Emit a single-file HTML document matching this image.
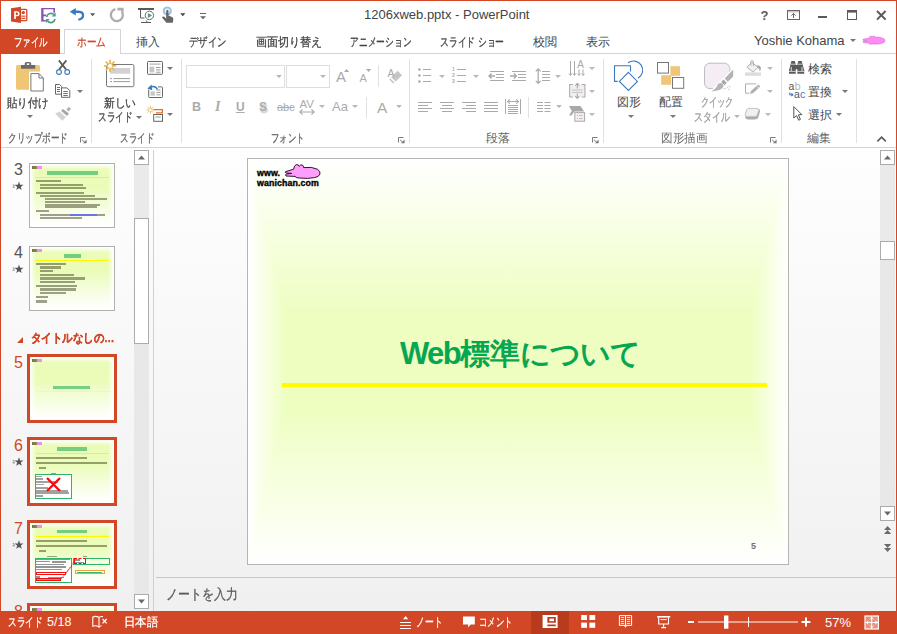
<!DOCTYPE html>
<html lang="ja">
<head>
<meta charset="utf-8">
<title>1206xweb.pptx - PowerPoint</title>
<style>
*{box-sizing:border-box;margin:0;padding:0}
html,body{width:897px;height:634px;overflow:hidden;background:#fff}
body{position:relative;font-family:"Liberation Sans",sans-serif;font-size:12px;color:#444;line-height:1}
.a{position:absolute}
.t{position:absolute;white-space:nowrap;line-height:1;font-size:12px;color:#444}
.t span.s{display:inline-block;transform-origin:0 50%;-webkit-text-stroke:.3px}
.g{color:#ababab}
.lbl{color:#666}
svg{position:absolute;left:0;top:0;overflow:visible}
.vsep{position:absolute;width:1px;background:#e1e1e1}
.dd{position:absolute;width:0;height:0;border-left:3px solid transparent;border-right:3px solid transparent;border-top:3px solid #777}
.dd.g{border-top-color:#b8b8b8}

.sb{background:#fff;border:1px solid #ababab}
.num{font-size:16px;color:#555}
.num.o{color:#d24726}
.star{font-size:12px;color:#555}
.th{width:86px;height:65px;border:1px solid #b0b0b0;overflow:hidden;background:
 linear-gradient(to right,#fff 0,rgba(255,255,255,0) 9%,rgba(255,255,255,0) 91%,#fff 100%),
 linear-gradient(to bottom,#fff 0,rgba(255,255,255,.55) 14%,rgba(255,255,255,0) 38%,rgba(255,255,255,0) 58%,rgba(255,255,255,.6) 84%,#fff 100%),
 #ecfdbc}
.th.c{background:
 linear-gradient(to right,#fff 0,rgba(255,255,255,0) 7%,rgba(255,255,255,0) 93%,#fff 100%),
 linear-gradient(to bottom,#fff 0,rgba(255,255,255,0) 9%,rgba(255,255,255,0) 38%,rgba(255,255,255,.5) 66%,rgba(255,255,255,.95) 94%,#fff 100%),
 #eafcb8}
.th.sel{width:90px;height:69px;border:3px solid #d24726}
.th i,.th u,.th b,.th svg{position:absolute;display:block;text-decoration:none}
.th i{filter:blur(.35px)}
.th b.lg{width:10px;height:3px;background:linear-gradient(to right,rgba(60,60,0,.7) 0,rgba(60,60,0,.6) 45%,#f58cf0 50%,#f58cf0 100%);filter:blur(.4px)}
.k{display:inline-block;width:1em;text-align:center}
</style>
</head>
<body>
<!-- window frame -->
<div class="a" style="left:0;top:0;width:897px;height:634px;border:1px solid #d24726;border-bottom:none"></div>

<!-- ===== title bar ===== -->
<div class="t" id="title" style="left:364px;top:8px;font-size:13px;color:#444">1206xweb.pptx - PowerPoint</div>

<svg id="svg-title" width="897" height="56" viewBox="0 0 897 56">
 <!-- PowerPoint logo -->
 <rect x="20.5" y="9.3" width="6.3" height="11.4" rx="1" fill="#fff" stroke="#d24726" stroke-width="1.3"/>
 <circle cx="23.3" cy="12.6" r="1.7" fill="#d24726"/>
 <rect x="21.5" y="15.6" width="4" height="1.1" fill="#d24726"/>
 <rect x="21.5" y="17.8" width="4" height="1.1" fill="#d24726"/>
 <path d="M11 8.3 L21 6.8 V23 L11 21.4 Z" fill="#d24726"/>
 <path d="M14.2 11.3 H17 Q19.6 11.3 19.6 13.8 Q19.6 16.3 17 16.3 H15.8 V18.9 H14.2 Z M15.8 12.6 V15 H16.8 Q18 15 18 13.8 Q18 12.6 16.8 12.6 Z" fill="#fff" fill-rule="evenodd"/>
 <!-- save / sync -->
 <path d="M41.2 8.1 H55 V12.8 H53.4 V9.3 H43.5 V14.4 H46 V16.2 H43.5 V20 H45.8 V21.6 H41.2 Z" fill="#8a51b5"/>
 <g fill="none" stroke="#4f9c85" stroke-width="1.7">
  <path d="M46.7 17 A4.3 4.3 0 0 1 54 14.6"/>
  <path d="M55 19 A4.3 4.3 0 0 1 47.6 21.2"/>
 </g>
 <path d="M55.7 12.6 V16.6 H51.7 Z" fill="#4f9c85"/>
 <path d="M45.9 23 V19 H49.9 Z" fill="#4f9c85"/>
 <!-- undo -->
 <path d="M69.8 11.7 L75.8 7.9 V10.4 H78.5 Q84.3 10.6 84.2 15.4 Q84 19.6 78.6 20.7 L78 18.8 Q81.9 17.9 81.9 15.3 Q81.9 12.9 78.5 12.9 H75.8 V15.6 Z" fill="#3b79bd"/>
 <path d="M90 13.3 H95.2 L92.6 16.2 Z" fill="#5a5a5a"/>
 <!-- redo (disabled) -->
 <path d="M115.4 9.2 A6 6 0 1 0 122.7 13.6" fill="none" stroke="#adadad" stroke-width="2.3"/>
 <path d="M117.4 7.8 H123.6 V13.8 H121.2 L121.2 10.4 L117.4 10.4 Z" fill="#adadad"/>
 <!-- start slideshow -->
 <rect x="138" y="8" width="16" height="2" fill="#5a5a5a"/>
 <path d="M140.5 10 V18 H144.5" fill="none" stroke="#5a5a5a" stroke-width="1"/>
 <path d="M141 22.5 H151 M146.3 20.5 L147.5 22.5" fill="none" stroke="#5a5a5a" stroke-width="1"/>
 <circle cx="149.4" cy="15.4" r="4.2" fill="#fff" stroke="#6a6a6a" stroke-width="1"/>
 <path d="M147.9 12.9 L152.2 15.4 L147.9 17.9 Z" fill="#4f9c85"/>
 <!-- touch mode -->
 <circle cx="167.3" cy="11" r="3.5" fill="none" stroke="#9cc2e4" stroke-width="2.2"/>
 <path d="M166.2 10.4 Q167.3 9.3 168.5 10.4 V15.6 L172.4 17.2 Q173.6 18 173.3 19.6 L172.8 22.8 H166.4 L162 17.6 Q162.6 16.2 164.2 16.8 L166.2 18.4 Z" fill="#666"/>
 <path d="M180.2 13.3 H185.4 L182.8 16.2 Z" fill="#444"/>
 <!-- customize QAT -->
 <rect x="200" y="13" width="6" height="1" fill="#666"/>
 <path d="M200 16.3 H206 L203 19.2 Z" fill="#666"/>
 <!-- window controls -->
 <text x="760.5" y="20" font-family="Liberation Sans, sans-serif" font-size="13" font-weight="bold" fill="#5a5a5a">?</text>
 <rect x="787.5" y="10.5" width="12" height="9" fill="none" stroke="#666" stroke-width="1"/>
 <rect x="787.5" y="10.5" width="12" height="2" fill="#666" opacity=".35"/>
 <path d="M793.5 18 V13.6 M791.3 15.6 L793.5 13.4 L795.7 15.6" fill="none" stroke="#666" stroke-width="1"/>
 <rect x="818" y="16" width="9" height="2" fill="#5a5a5a"/>
 <rect x="847.5" y="11.5" width="9" height="8" fill="none" stroke="#5a5a5a" stroke-width="1"/>
 <rect x="847" y="10" width="10" height="2.6" fill="#5a5a5a"/>
 <path d="M877 11 L885.6 19.6 M885.6 11 L877 19.6" stroke="#5a5a5a" stroke-width="2" fill="none"/>
 <!-- avatar (pink alligator) -->
 <path d="M863.2 39.2 L869 38 L870.5 36 L872.5 36.8 L873.5 35.8 L875.2 37 Q881 36.6 884.6 39.2 Q885.6 41 884 42.6 Q880 44.6 872.6 44 Q869 44.6 868 43 L863.4 42.6 L863 41.4 L866.6 40.8 L863 40.2 Z" fill="#ff8cf4" stroke="#c060c0" stroke-width=".5"/>
</svg>

<!-- ===== tab row ===== -->
<div class="a" style="left:1px;top:29px;width:59px;height:25px;background:#d24726"></div>
<div class="a" style="left:1px;top:53px;width:895px;height:1px;background:#d4d4d4"></div>
<div class="a" style="left:1px;top:29px;width:59px;height:25px;background:#d24726"></div>
<div class="a" style="left:64px;top:29px;width:57px;height:25px;background:#fff;border:1px solid #d4d4d4;border-bottom:none"></div>
<div class="t" style="left:14px;top:36px;color:#fff"><span class="s" style="transform:scaleX(.70)"><span class="k">フ</span><span class="k">ァ</span><span class="k">イ</span><span class="k">ル</span></span></div>
<div class="t" style="left:77px;top:36px;color:#d24726"><span class="s" style="transform:scaleX(.80)"><span class="k">ホ</span><span class="k">ー</span><span class="k">ム</span></span></div>
<div class="t" style="left:136px;top:36px"><span class="k">挿</span><span class="k">入</span></div>
<div class="t" style="left:189px;top:36px"><span class="s" style="transform:scaleX(.78)"><span class="k">デ</span><span class="k">ザ</span><span class="k">イ</span><span class="k">ン</span></span></div>
<div class="t" style="left:256px;top:36px"><span class="s" style="transform:scaleX(.92)"><span class="k">画</span><span class="k">面</span><span class="k">切</span><span class="k">り</span><span class="k">替</span><span class="k">え</span></span></div>
<div class="t" style="left:350px;top:36px"><span class="s" style="transform:scaleX(.73)"><span class="k">ア</span><span class="k">ニ</span><span class="k">メ</span><span class="k">ー</span><span class="k">シ</span><span class="k">ョ</span><span class="k">ン</span></span></div>
<div class="t" style="left:440px;top:36px"><span class="s" style="transform:scaleX(.735)"><span class="k">ス</span><span class="k">ラ</span><span class="k">イ</span><span class="k">ド</span> <span class="k">シ</span><span class="k">ョ</span><span class="k">ー</span></span></div>
<div class="t" style="left:533px;top:36px"><span class="k">校</span><span class="k">閲</span></div>
<div class="t" style="left:586px;top:36px"><span class="k">表</span><span class="k">示</span></div>
<div class="t" id="user" style="left:754px;top:34px;font-size:13px">Yoshie Kohama</div>
<div class="dd" style="left:850px;top:39px"></div>

<!-- ===== ribbon ===== -->
<div class="a" style="left:1px;top:147px;width:895px;height:1px;background:#d4d4d4"></div>
<div class="vsep" style="left:91px;top:59px;height:84px"></div>
<div class="vsep" style="left:181px;top:59px;height:84px"></div>
<div class="vsep" style="left:409px;top:59px;height:84px"></div>
<div class="vsep" style="left:603px;top:59px;height:84px"></div>
<div class="vsep" style="left:781px;top:59px;height:84px"></div>
<div class="vsep" style="left:856px;top:59px;height:84px"></div>

<svg id="svg-rib1" width="897" height="150" viewBox="0 0 897 150">
 <!-- paste -->
 <rect x="16" y="65" width="24" height="24.7" rx="1.6" fill="#efc676"/>
 <path d="M21 65 H24.7 V63.6 Q24.7 62 26.3 62 H29.6 Q31.2 62 31.2 63.6 V65 H35.2 V68.7 H21 Z" fill="#6a6a6a"/>
 <rect x="26.7" y="63.4" width="2.6" height="1.6" fill="#fff"/>
 <rect x="29" y="71.6" width="16" height="21.4" fill="#fff"/>
 <path d="M30.9 73.6 H39 L43.3 78 V91 H30.9 Z" fill="#fff" stroke="#777" stroke-width="1"/>
 <path d="M39 73.6 V78 H43.3" fill="none" stroke="#777" stroke-width="1"/>
 <!-- cut -->
 <path d="M58.8 60.4 L66 69.4 M66.4 60.4 L59.2 69.4" stroke="#5a5a5a" stroke-width="1.7" fill="none"/>
 <circle cx="59" cy="72" r="2.4" fill="#fff" stroke="#3b79bd" stroke-width="1.1"/>
 <circle cx="67.2" cy="72" r="2.4" fill="#fff" stroke="#3b79bd" stroke-width="1.1"/>
 <!-- copy -->
 <path d="M55.5 84.5 H59.6 L61.8 86.7 V94.2 H55.5 Z" fill="#fff" stroke="#666" stroke-width="1"/>
 <path d="M57 87.5 H60 M57 89.5 H60 M57 91.5 H60" stroke="#3b79bd" stroke-width="1"/>
 <path d="M61.5 87.9 H67 L69.8 90.7 V97.3 H61.5 Z" fill="#fff" stroke="#666" stroke-width="1"/>
 <path d="M63.3 91.5 H67.8 M63.3 93.5 H67.8 M63.3 95.5 H67.8" stroke="#3b79bd" stroke-width="1"/>
 <!-- format painter (disabled) -->
 <path d="M68.5 106.9 L71.1 108.6 L68.9 111.6 L66.3 109.7 Z" fill="#b2b2b2"/>
 <path d="M63 108.9 L68.9 113.6 L67.1 115.9 L61 110.7 Z" fill="#a6a6a6"/>
 <path d="M59.8 111.6 L65.9 117.3 L62.2 120.7 L55.1 113.4 Z" fill="#d4d4d4"/>
 <!-- new slide -->
 <rect x="106.5" y="64.5" width="27.4" height="22.2" rx="1.6" fill="#fff" stroke="#777" stroke-width="1"/>
 <rect x="110" y="68" width="20.2" height="5.7" fill="#d2d2d2"/>
 <path d="M110 78.6 H112 M113.4 78.6 H130 M110 81.6 H112 M113.4 81.6 H130" stroke="#9a9a9a" stroke-width="1"/>
 <g stroke="#e9b955" stroke-width="1.8" fill="none">
  <path d="M110.1 59.8 V72 M104 65.9 H116.2 M105.8 61.6 L114.4 70.2 M114.4 61.6 L105.8 70.2"/>
 </g>
 <circle cx="110.1" cy="65.9" r="2" fill="#fff"/>
 <!-- layout -->
 <rect x="147.5" y="61.5" width="15" height="12.8" rx=".8" fill="#fff" stroke="#666" stroke-width="1"/>
 <rect x="149.5" y="63.3" width="11" height="1.7" fill="#c8c8c8"/>
 <rect x="149.5" y="66.6" width="4.8" height="5.8" fill="#c8c8c8"/>
 <path d="M156 67.5 H160.6 M156 69.9 H160.6 M156 72.2 H160.6" stroke="#9a9a9a" stroke-width="1"/>
 <!-- reset -->
 <rect x="148.7" y="86.9" width="13.8" height="10.6" rx=".8" fill="#fff" stroke="#666" stroke-width="1"/>
 <rect x="150.5" y="91.4" width="4.4" height="4.3" fill="#c8c8c8"/>
 <path d="M156.4 90 H160.6 M156.4 92.4 H160.6 M156.4 94.8 H160.6" stroke="#9a9a9a" stroke-width="1"/>
 <path d="M146 84 H158 V89.6 H146 Z" fill="#fff"/>
 <path d="M157.4 89.6 Q156 85.6 151.2 86.8" fill="none" stroke="#3b79bd" stroke-width="1.4"/>
 <path d="M147.4 88.6 L151.6 84.6 L152.2 90.2 Z" fill="#3b79bd"/>
 <!-- section -->
 <g stroke="#e9b955" stroke-width="1" fill="none">
  <path d="M150.4 106.2 V113.6 M146.7 109.9 H154.1 M147.8 107.3 L153 112.5 M153 107.3 L147.8 112.5"/>
 </g>
 <circle cx="150.4" cy="109.9" r="1.2" fill="#fff"/>
 <path d="M153.6 109.6 H162.4 V112.8 H156" fill="none" stroke="#e3701e" stroke-width="1.2"/>
 <rect x="153.7" y="114.5" width="8.8" height="6.8" fill="#fff" stroke="#666" stroke-width="1"/>
 <rect x="155.5" y="116.2" width="5.2" height="1.8" fill="#c8c8c8"/>
</svg>
<svg id="svg-rib2" width="897" height="150" viewBox="0 0 897 150">
 <g fill="#a9a9a9">
  <!-- grow/shrink triangles -->
  <path d="M344 72 L346.6 69 L349.2 72 Z"/>
  <path d="M366 69 H371.2 L368.6 72 Z"/>
  <!-- clear formatting eraser -->
  <path d="M397.6 70.8 L402 75.2 L395.6 81.6 L391.2 77.2 Z" fill="#c6c6c6"/>
  <path d="M390.4 78.4 L394.4 82.4 L393.2 83.6 L389.2 79.6 Z" fill="#c6c6c6"/>
 </g>
 <!-- AV arrows -->
 <path d="M299.6 112 H314.4 M302.6 109.4 L299.8 112 L302.6 114.6 M311.4 109.4 L314.2 112 L311.4 114.6" fill="none" stroke="#a9a9a9" stroke-width="1.1"/>
 <g stroke="#a9a9a9" stroke-width="1" fill="none">
  <!-- bullets -->
  <path d="M423 69.5 H431 M423 75.5 H431 M423 81.5 H431"/>
  <!-- numbering -->
  <path d="M457 69.5 H466 M457 75.5 H466 M457 81.5 H466"/>
  <!-- decrease indent -->
  <path d="M490 71.5 H504 M496 74.5 H504 M496 77.5 H504 M490 80.5 H504" />
  <path d="M489 76 H495 M491.6 73.4 L489 76 L491.6 78.6" stroke-width="1.4"/>
  <!-- increase indent -->
  <path d="M512 71.5 H526 M518 74.5 H526 M518 77.5 H526 M512 80.5 H526" />
  <path d="M510 76 H516.4 M513.8 73.4 L516.4 76 L513.8 78.6" stroke-width="1.4"/>
  <!-- line spacing -->
  <path d="M542 71.5 H550 M542 74.5 H550 M542 77.5 H550 M542 80.5 H550"/>
  <path d="M538.2 69 V83 M535.8 71.4 L538.2 68.8 L540.6 71.4 M535.8 80.8 L538.2 83.4 L540.6 80.8" stroke-width="1.2"/>
  <!-- align left/center/right/justify -->
  <path d="M418 102.5 H432 M418 105.5 H428 M418 108.5 H432 M418 111.5 H428"/>
  <path d="M440 102.5 H454 M442 105.5 H452 M440 108.5 H454 M442 111.5 H452"/>
  <path d="M462 102.5 H476 M466 105.5 H476 M462 108.5 H476 M466 111.5 H476"/>
  <path d="M484 102.5 H498 M484 105.5 H498 M484 108.5 H498 M484 111.5 H498"/>
  <!-- distributed -->
  <path d="M505.5 99 V114 M520.5 99 V114"/>
  <path d="M508 105.5 H518 M508 107.5 H518 M508 109.5 H518 M508 111.5 H518 M508 113.5 H518"/>
  <path d="M507.6 101.5 H518.4 M509.8 99.4 L507.6 101.5 L509.8 103.6 M516.2 99.4 L518.4 101.5 L516.2 103.6" stroke-width="1.1"/>
  <!-- columns -->
  <path d="M537 102.5 H543 M537 105.5 H543 M537 108.5 H543 M537 111.5 H543 M544.5 102.5 H550.5 M544.5 105.5 H550.5 M544.5 108.5 H550.5 M544.5 111.5 H550.5"/>
  <!-- text direction -->
  <path d="M570.5 61 V75 M574.5 61 V75 M579 69.4 V75 M583 69.4 V75"/>
  <path d="M569 73.4 L570.5 75.6 L572 73.4 M573 73.4 L574.5 75.6 L576 73.4 M577.6 73.6 L579 75.6 L580.4 73.6 M581.6 73.6 L583 75.6 L584.4 73.6" stroke-width=".9"/>
  <!-- align text -->
  <rect x="570.5" y="85" width="13.6" height="11.6" fill="#f4eef4" stroke="none"/>
  <path d="M573 84.5 H569.7 V97 H573 M581.6 84.5 H584.9 V97 H581.6" stroke-width="1.1"/>
  <path d="M572 90 H582.6 M572 92.4 H582.6" stroke="#c4c4c4"/>
  <path d="M577.3 88.4 V83.6 M575.2 85.6 L577.3 83.4 L579.4 85.6 M577.3 93.6 V98.2 M575.2 96.2 L577.3 98.4 L579.4 96.2" stroke-width="1.1"/>
 </g>
 <g fill="#a9a9a9">
  <circle cx="419.4" cy="69.5" r="1.3"/><circle cx="419.4" cy="75.5" r="1.3"/><circle cx="419.4" cy="81.5" r="1.3"/>
  <!-- smartart -->
  <path d="M569 106 H580.4 L584.2 111.6 H574.4 L571.4 115.6 H569 L571.8 111 Z"/>
  <rect x="574.8" y="112.6" width="9.8" height="8.6" fill="#f4eef4" stroke="#a9a9a9" stroke-width="1"/>
  <path d="M577 115.5 H578 M579 115.5 H582.6 M577 118.5 H578 M579 118.5 H582.6" stroke="#c0c0c0" stroke-width="1"/>
 </g>
 <g font-family="Liberation Sans, sans-serif" font-size="5" font-weight="bold" fill="#a9a9a9">
  <text x="452" y="71.4">1</text><text x="452" y="77.4">2</text><text x="452" y="83.4">3</text>
 </g>
 <text x="577.3" y="67.8" font-family="Liberation Sans, sans-serif" font-size="10" fill="#a9a9a9">A</text>
 <text x="387.6" y="76.8" font-family="Liberation Sans, sans-serif" font-size="10.5" fill="#a9a9a9">A</text>
 <!-- dialog launchers -->
 <g fill="none" stroke="#7a7a7a" stroke-width="1">
  <path id="dl" d="M85.5 137.5 H80.5 V142.5"/>
  <path d="M403.5 137.5 H398.5 V142.5"/>
  <path d="M597.5 137.5 H592.5 V142.5"/>
  <path d="M775.5 137.5 H770.5 V142.5"/>
 </g>
 <g fill="#7a7a7a">
  <path d="M86.6 143.2 H83 L86.6 139.6 Z M82.4 139.4 L85.4 142.4 L84.8 143 L81.8 140 Z"/>
  <path d="M404.6 143.2 H401 L404.6 139.6 Z M400.4 139.4 L403.4 142.4 L402.8 143 L399.8 140 Z"/>
  <path d="M598.6 143.2 H595 L598.6 139.6 Z M594.4 139.4 L597.4 142.4 L596.8 143 L593.8 140 Z"/>
  <path d="M776.6 143.2 H773 L776.6 139.6 Z M772.4 139.4 L775.4 142.4 L774.8 143 L771.8 140 Z"/>
 </g>
 <!-- collapse ribbon caret -->
 <path d="M877.4 141.4 L881.6 137.2 L885.8 141.4" fill="none" stroke="#5a5a5a" stroke-width="1.6"/>
</svg>
<svg id="svg-rib3" width="897" height="150" viewBox="0 0 897 150">
 <!-- shapes -->
 <g fill="none" stroke="#3b79bd" stroke-width="1.1">
  <path d="M628 62.8 A9.2 9.2 0 1 1 638 78.2"/>
  <path d="M617.6 81.4 H614.5 V65.8 H630.5 V71.6"/>
  <path d="M628.4 72.4 L637.4 81.4 L628.4 90.4 L619.4 81.4 Z" fill="#fff"/>
 </g>
 <!-- arrange -->
 <rect x="670.4" y="66.2" width="9.6" height="9.6" fill="#efc676"/>
 <rect x="661.2" y="75.2" width="10" height="9.6" fill="#efc676"/>
 <rect x="657.5" y="62.5" width="11" height="10.6" fill="#fff" stroke="#777" stroke-width="1"/>
 <rect x="672.5" y="77.5" width="11.2" height="10.8" fill="#fff" stroke="#777" stroke-width="1"/>
 <!-- quick styles (disabled) -->
 <rect x="704.5" y="63.2" width="25.4" height="25.4" rx="5.5" fill="#f4eef4" stroke="#bdbdbd" stroke-width="1"/>
 <path d="M709 92.5 L737 92.5 L737 64 Z" fill="#fff"/>
 <path d="M733.2 69.6 L733.2 76.4 L727.8 81.8 L724.6 78.6 Z" fill="#b4b4b4"/>
 <path d="M723.6 79.6 L726.8 82.8 L724.4 85.2 L721.2 82 Z" fill="#a8a8a8"/>
 <path d="M720.2 83 Q723.6 83.4 723.4 86.2 Q722.4 90.6 711.4 91.4 Q716.8 88.2 717.2 85.6 Q717.8 83 720.2 83 Z" fill="#b4b4b4"/>
 <path d="M723.6 88.8 Q726.4 88.6 728.8 86.2 M728 90 Q730 89 730 86" fill="none" stroke="#c4c4c4" stroke-width="1" stroke-dasharray="2 1.4"/>
 <!-- shape fill -->
 <rect x="745" y="72.4" width="16" height="3.4" fill="#dcdcdc"/>
 <path d="M751.8 62.4 L758.2 67.3 L752.9 72 L747 67.3 Z" fill="#f4eef4" stroke="#b0b0b0" stroke-width="1"/>
 <path d="M750.8 65.8 V62 Q750.8 60.5 752.1 60.5 Q753.4 60.5 753.4 62 V66.2" fill="none" stroke="#b0b0b0" stroke-width="1"/>
 <path d="M757 65.2 Q760.6 65.4 760.9 68 Q761 70 759.8 71.6 Q759.6 68.6 757.4 67.6 Z" fill="#a8a8a8"/>
 <!-- shape outline -->
 <path d="M749.4 93.2 H745.5 V83.9 H756.2" fill="none" stroke="#b0b0b0" stroke-width="1"/>
 <path d="M758.2 84.4 L760.4 86.6 L753.2 93 L750 93.9 L750.9 91 Z" fill="#b0b0b0"/>
 <path d="M756.6 85.8 L758.8 88" stroke="#fff" stroke-width=".6"/>
 <!-- shape effects -->
 <path d="M745 115.6 Q745 119.6 748.2 119.6 H754.8 Q757.6 119.6 758.4 117.2 L760 111.4 Q760.2 109.2 758.6 108.8 L757 115 Q756.6 116.6 755 116.6 H746.4 Z" fill="#adadad"/>
 <path d="M748.6 108.4 H756.8 Q759.2 108.4 758.6 110.6 L757.2 115 Q756.8 116.4 755.2 116.4 H746.4 Q744.6 116.4 745.2 114.6 L746.8 109.8 Q747.2 108.4 748.6 108.4 Z" fill="#f4eef4" stroke="#c2c2c2" stroke-width="1"/>
 <!-- find (binoculars) -->
 <g fill="#5a5a5a">
  <path d="M791.4 61 H794.8 L795.7 64.2 V65 H797.4 V64.2 L798.3 61 H801.7 L803 66 L804.2 70.2 V73.8 H797.4 V69.2 H795.7 V73.8 H789 V70.2 L790.2 66 Z"/>
 </g>
 <path d="M789 71.4 H795.7 M797.4 71.4 H804.2" stroke="#fff" stroke-width=".7"/>
 <path d="M791.3 67 V71 M802 67 V71" stroke="#fff" stroke-width=".8"/>
 <path d="M791 64.2 H795.4 M797.6 64.2 H802" stroke="#fff" stroke-width=".7"/>
 <!-- replace -->
 <g font-family="Liberation Sans, sans-serif" font-size="10.5">
  <text x="788.6" y="90.4" fill="#555">a</text><text x="794.8" y="90.4" fill="#b4b4b4">b</text>
  <text x="794" y="98.2" fill="#555">a</text><text x="800" y="98.2" fill="#3b79bd">c</text>
 </g>
 <path d="M789.8 92.4 V94.8 H792.8 M791.4 93.4 L792.9 94.8 L791.4 96.2" fill="none" stroke="#3b79bd" stroke-width="1.1"/>
 <!-- select cursor -->
 <path d="M793.8 106.6 V118 L796.6 115.6 L798.6 120.2 L800.4 119.4 L798.4 114.8 L801.8 114.6 Z" fill="#fff" stroke="#555" stroke-width="1" stroke-linejoin="miter"/>
</svg>
<!-- clipboard -->
<div class="t" style="left:7px;top:97px"><span class="s" style="transform:scaleX(.87)"><span class="k">貼</span><span class="k">り</span><span class="k">付</span><span class="k">け</span></span></div>
<div class="dd" style="left:27px;top:115px"></div>
<div class="dd" style="left:77px;top:90px"></div>
<div class="t lbl" style="left:8px;top:132px"><span class="s" style="transform:scaleX(.715)"><span class="k">ク</span><span class="k">リ</span><span class="k">ッ</span><span class="k">プ</span><span class="k">ボ</span><span class="k">ー</span><span class="k">ド</span></span></div>
<!-- slides -->
<div class="t" style="left:103.5px;top:97px"><span class="s" style="transform:scaleX(.89)"><span class="k">新</span><span class="k">し</span><span class="k">い</span></span></div>
<div class="t" style="left:98px;top:111px"><span class="s" style="transform:scaleX(.72)"><span class="k">ス</span><span class="k">ラ</span><span class="k">イ</span><span class="k">ド</span></span></div>
<div class="dd" style="left:136px;top:116px"></div>
<div class="dd" style="left:167px;top:67px"></div>
<div class="dd" style="left:167px;top:113px"></div>
<div class="t lbl" style="left:120px;top:132px"><span class="s" style="transform:scaleX(.71)"><span class="k">ス</span><span class="k">ラ</span><span class="k">イ</span><span class="k">ド</span></span></div>
<!-- font -->
<div class="a" style="left:186px;top:65px;width:99px;height:23px;border:1px solid #dedede"></div>
<div class="a" style="left:286px;top:65px;width:44px;height:23px;border:1px solid #dedede"></div>
<div class="dd g" style="left:276px;top:75px"></div>
<div class="dd g" style="left:320px;top:75px"></div>
<div class="t g" style="left:192px;top:101px;font-size:12.5px;font-weight:bold">B</div>
<div class="t g" style="left:215px;top:100px;font-size:14px;font-style:italic;font-weight:bold;font-family:'Liberation Serif',serif">I</div>
<div class="t g" style="left:236px;top:101px;font-size:12px;font-weight:bold;text-decoration:underline">U</div>
<div class="t g" style="left:259px;top:101px;font-size:12px;font-weight:bold;text-shadow:1px 1.5px 1.5px #c4c4c4">S</div>
<div class="t g" style="left:277px;top:102px;font-size:11px;text-decoration:line-through">abc</div>
<div class="t g" style="left:299.5px;top:99px;font-size:11.5px">AV</div>
<div class="dd g" style="left:319px;top:105px"></div>
<div class="t g" style="left:332px;top:100px;font-size:13px">Aa</div>
<div class="dd g" style="left:352px;top:105px"></div>
<div class="vsep" style="left:366px;top:97px;height:21px"></div>
<div class="t g" style="left:377px;top:99.5px;font-size:15.5px">A</div>
<div class="dd g" style="left:396px;top:105px"></div>
<div class="t g" style="left:336px;top:69px;font-size:15px">A</div>
<div class="t g" style="left:359.5px;top:72.5px;font-size:11px">A</div>
<div class="vsep" style="left:378px;top:65px;height:22px"></div>
<div class="t lbl" style="left:271px;top:132px"><span class="s" style="transform:scaleX(.70)"><span class="k">フ</span><span class="k">ォ</span><span class="k">ン</span><span class="k">ト</span></span></div>
<!-- paragraph -->
<div class="dd g" style="left:439px;top:75px"></div>
<div class="dd g" style="left:473px;top:75px"></div>
<div class="dd g" style="left:555px;top:75px"></div>
<div class="dd g" style="left:556px;top:105px"></div>
<div class="dd g" style="left:589px;top:67px"></div>
<div class="dd g" style="left:589px;top:90px"></div>
<div class="dd g" style="left:589px;top:113px"></div>
<div class="vsep" style="left:528px;top:97px;height:21px"></div>
<div class="t lbl" style="left:486px;top:132px"><span class="k">段</span><span class="k">落</span></div>
<!-- drawing -->
<div class="t" style="left:617px;top:96px"><span class="k">図</span><span class="k">形</span></div>
<div class="dd" style="left:628px;top:115px"></div>
<div class="t" style="left:659px;top:96px"><span class="k">配</span><span class="k">置</span></div>
<div class="dd" style="left:670px;top:115px"></div>
<div class="t g" style="left:701px;top:96px;color:#9a9a9a"><span class="s" style="transform:scaleX(.68)"><span class="k">ク</span><span class="k">イ</span><span class="k">ッ</span><span class="k">ク</span></span></div>
<div class="t g" style="left:694px;top:111px;color:#9a9a9a"><span class="s" style="transform:scaleX(.74)"><span class="k">ス</span><span class="k">タ</span><span class="k">イ</span><span class="k">ル</span></span></div>
<div class="dd g" style="left:734px;top:115px"></div>
<div class="dd g" style="left:767px;top:67px"></div>
<div class="dd g" style="left:767px;top:90px"></div>
<div class="dd g" style="left:765px;top:113px"></div>
<div class="t lbl" style="left:661px;top:132px"><span class="s" style="transform:scaleX(.97);-webkit-text-stroke:0"><span class="k">図</span><span class="k">形</span><span class="k">描</span><span class="k">画</span></span></div>
<!-- editing -->
<div class="t" style="left:808px;top:63px"><span class="k">検</span><span class="k">索</span></div>
<div class="t" style="left:808px;top:86px"><span class="k">置</span><span class="k">換</span></div>
<div class="dd" style="left:842px;top:90px"></div>
<div class="t" style="left:808px;top:109px"><span class="k">選</span><span class="k">択</span></div>
<div class="dd" style="left:836px;top:113px"></div>
<div class="t lbl" style="left:807px;top:132px"><span class="k">編</span><span class="k">集</span></div>

<!-- ===== left thumbnail pane ===== -->
<div class="a" id="pane" style="left:1px;top:148px;width:152px;height:463px;background:linear-gradient(#fefefe,#f0f0f0)"></div>
<div class="a" style="left:153px;top:150px;width:1px;height:461px;background:#d0d0d0"></div>
<!-- ===== main workspace ===== -->
<div class="a" id="work" style="left:154px;top:148px;width:742px;height:463px;background:linear-gradient(#fefefe,#f0f0f0)"></div>

<!-- main slide -->
<div class="a" id="slide" style="left:247px;top:158px;width:542px;height:407px;border:1px solid #b4b4b4;background:#fff"></div>
<svg id="svg-slide" width="897" height="634" viewBox="0 0 897 634" shape-rendering="crispEdges">
 <defs><linearGradient id="gt" gradientUnits="userSpaceOnUse" x1="0" y1="159" x2="0" y2="316"><stop offset="0" stop-color="#fff"/><stop offset=".5" stop-color="#f7ffe0"/><stop offset="1" stop-color="#edfec0"/></linearGradient><linearGradient id="gb" gradientUnits="userSpaceOnUse" x1="0" y1="564" x2="0" y2="406"><stop offset="0" stop-color="#fff"/><stop offset=".5" stop-color="#f7ffe0"/><stop offset="1" stop-color="#edfec0"/></linearGradient><linearGradient id="gl" gradientUnits="userSpaceOnUse" x1="248" y1="0" x2="286" y2="0"><stop offset="0" stop-color="#fff"/><stop offset=".5" stop-color="#f7ffe0"/><stop offset="1" stop-color="#edfec0"/></linearGradient><linearGradient id="gr" gradientUnits="userSpaceOnUse" x1="788" y1="0" x2="750" y2="0"><stop offset="0" stop-color="#fff"/><stop offset=".5" stop-color="#f7ffe0"/><stop offset="1" stop-color="#edfec0"/></linearGradient></defs>
 <rect x="286" y="316" width="464" height="90" fill="#edfec0"/>
 <path d="M248 159 H788 L750 316 H286 Z" fill="url(#gt)"/>
 <path d="M248 564 H788 L750 406 H286 Z" fill="url(#gb)"/>
 <path d="M248 159 V564 L286 406 V316 Z" fill="url(#gl)"/>
 <path d="M788 159 V564 L750 406 V316 Z" fill="url(#gr)"/>
</svg>
<div class="t" style="left:257px;top:168.6px;font-size:8.8px;font-weight:bold;color:#000;letter-spacing:.1px;-webkit-text-stroke:.35px #000">www.</div>
<div class="t" style="left:257px;top:178.8px;font-size:8.8px;font-weight:bold;color:#000;letter-spacing:.1px;-webkit-text-stroke:.35px #000">wanichan.com</div>
<div class="t" id="ttl" style="left:400px;top:338px;font-size:31px;font-weight:bold;color:#07a650"><span style="letter-spacing:-1.6px">Web</span><span style="font-size:30px"><span class="k">標</span><span class="k">準</span><span class="k">に</span><span class="k">つ</span><span class="k">い</span><span class="k">て</span></span></div>
<div class="a" style="left:282px;top:383px;width:485px;height:4px;background:#fffb00"></div>
<div class="t" style="left:751px;top:541.5px;font-size:9px;font-weight:bold;color:#737373">5</div>

<!-- right scrollbar -->
<div class="a" style="left:880px;top:150px;width:15px;height:371px;background:#eaeaea"></div>
<div class="a" style="left:880px;top:260px;width:15px;height:246px;background:#e8e8e8"></div>
<div class="a sb" style="left:880px;top:150px;width:15px;height:15px"></div>
<div class="a sb" style="left:880px;top:241px;width:15px;height:19px"></div>
<div class="a sb" style="left:880px;top:506px;width:15px;height:15px"></div>

<!-- left scrollbar -->
<div class="a" style="left:134px;top:150px;width:15px;height:459px;background:#eaeaea"></div>
<div class="a" style="left:134px;top:344px;width:15px;height:250px;background:#e8e8e8"></div>
<div class="a sb" style="left:134px;top:150px;width:15px;height:15px"></div>
<div class="a sb" style="left:134px;top:218px;width:15px;height:126px"></div>
<div class="a sb" style="left:134px;top:594px;width:15px;height:15px"></div>

<!-- thumbnails -->
<div class="t num" style="left:14px;top:162px">3</div>
<div class="t num" style="left:14px;top:245px">4</div>
<div class="a th c" style="left:29px;top:163px"><b class="lg" style="left:2px;top:2px"></b><i style="left:17.0px;top:6.8px;width:50.5px;height:4px;background:rgba(0,160,70,.5)"></i><i style="left:5.4px;top:12.8px;width:73.6px;height:1.2px;background:#fff700"></i><i style="left:6.0px;top:15.7px;width:25.0px;height:2.2px;background:rgba(30,30,0,.42)"></i><i style="left:10.0px;top:19.5px;width:43.0px;height:2.2px;background:rgba(30,30,0,.42)"></i><i style="left:10.0px;top:22.5px;width:46.0px;height:2.2px;background:rgba(30,30,0,.42)"></i><i style="left:6.0px;top:27.6px;width:48.0px;height:2.2px;background:rgba(30,30,0,.42)"></i><i style="left:10.0px;top:30.9px;width:55.0px;height:2.2px;background:rgba(30,30,0,.42)"></i><i style="left:15.0px;top:33.9px;width:62.0px;height:2.2px;background:rgba(30,30,0,.42)"></i><i style="left:15.0px;top:36.6px;width:40.0px;height:2.2px;background:rgba(30,30,0,.42)"></i><i style="left:15.0px;top:39.7px;width:55.0px;height:2.2px;background:rgba(30,30,0,.42)"></i><i style="left:15.0px;top:42.2px;width:52.0px;height:2.2px;background:rgba(30,30,0,.42)"></i><i style="left:6.0px;top:46.1px;width:13.0px;height:2.2px;background:rgba(30,30,0,.42)"></i><i style="left:10.0px;top:49.5px;width:30.0px;height:2.2px;background:rgba(30,30,0,.42)"></i><i style="left:67.0px;top:49.5px;width:8.0px;height:2.2px;background:rgba(30,30,0,.42)"></i><i style="left:10.0px;top:53.2px;width:42.0px;height:2.2px;background:rgba(30,30,0,.42)"></i><i style="left:40.0px;top:49.5px;width:27.0px;height:2.2px;background:rgba(20,20,230,.6)"></i></div>
<div class="a th c" style="left:29px;top:246px"><b class="lg" style="left:2px;top:2px"></b><i style="left:34.0px;top:6.9px;width:16.5px;height:4.2px;background:rgba(0,160,70,.5)"></i><i style="left:5.4px;top:12.8px;width:73.6px;height:1.2px;background:#fff700"></i><i style="left:6.0px;top:15.6px;width:30.0px;height:2.2px;background:rgba(30,30,0,.42)"></i><i style="left:10.0px;top:19.4px;width:20.5px;height:2.2px;background:rgba(30,30,0,.42)"></i><i style="left:10.0px;top:22.9px;width:12.5px;height:2.2px;background:rgba(30,30,0,.42)"></i><i style="left:10.0px;top:26.6px;width:34.0px;height:2.2px;background:rgba(30,30,0,.42)"></i><i style="left:10.0px;top:30.4px;width:44.5px;height:2.2px;background:rgba(30,30,0,.42)"></i><i style="left:10.0px;top:33.9px;width:35.0px;height:2.2px;background:rgba(30,30,0,.42)"></i><i style="left:6.0px;top:37.9px;width:40.5px;height:2.2px;background:rgba(30,30,0,.42)"></i><i style="left:10.0px;top:41.4px;width:35.5px;height:2.2px;background:rgba(30,30,0,.42)"></i><i style="left:10.0px;top:45.2px;width:25.5px;height:2.2px;background:rgba(30,30,0,.42)"></i><i style="left:6.0px;top:48.9px;width:11.5px;height:2.2px;background:rgba(30,30,0,.42)"></i><i style="left:6.0px;top:53.4px;width:10.5px;height:2.2px;background:rgba(30,30,0,.42)"></i></div>
<div class="a th c sel" style="left:27px;top:354px"><b class="lg" style="left:2px;top:2px"></b><i style="left:22.5px;top:28.6px;width:37.0px;height:3.4px;background:rgba(0,160,70,.5)"></i><i style="left:5.6px;top:33.7px;width:74.0px;height:1.4px;background:rgba(250,252,120,.85)"></i></div>
<div class="a th c sel" style="left:27px;top:437px"><b class="lg" style="left:2px;top:2px"></b><i style="left:27.0px;top:6.9px;width:30.4px;height:3.8px;background:rgba(0,160,70,.5)"></i><i style="left:5.7px;top:12.9px;width:73.3px;height:1.2px;background:#fff700"></i><i style="left:6.0px;top:16.8px;width:51.0px;height:2.4px;background:rgba(30,30,0,.42)"></i><i style="left:6.0px;top:21.8px;width:71.0px;height:2.4px;background:rgba(30,30,0,.42)"></i><i style="left:9.0px;top:26.6px;width:7.0px;height:2.4px;background:rgba(30,30,0,.42)"></i><i style="left:21.0px;top:32.5px;width:5.0px;height:1px;background:rgba(30,30,0,.42)"></i><u style="left:5.2px;top:34.4px;width:36.8px;height:24.2px;border:1px solid #2fb56a;background:#fff"></u><i style="left:6.0px;top:35.8px;width:6.0px;height:1.4px;background:rgba(20,20,20,.4)"></i><i style="left:6.0px;top:38.3px;width:7.0px;height:1.4px;background:rgba(20,20,20,.4)"></i><i style="left:6.0px;top:41.3px;width:22.0px;height:1.4px;background:rgba(20,20,20,.4)"></i><i style="left:6.0px;top:43.8px;width:8.0px;height:1.4px;background:rgba(20,20,20,.4)"></i><i style="left:6.0px;top:47.3px;width:12.0px;height:1.4px;background:rgba(20,20,20,.4)"></i><i style="left:6.0px;top:50.3px;width:32.0px;height:1.4px;background:rgba(20,20,20,.4)"></i><i style="left:6.0px;top:52.3px;width:33.0px;height:1.4px;background:rgba(20,20,20,.4)"></i><i style="left:6.0px;top:55.3px;width:7.0px;height:1.4px;background:rgba(20,20,20,.4)"></i><svg style="left:16.2px;top:37.2px" width="15" height="15" viewBox="0 0 15 15"><path d="M1 1 L14 14 M14 1 L1 14" stroke="#f01010" stroke-width="2.4" fill="none"/></svg></div>
<div class="a th c sel" style="left:27px;top:520px"><b class="lg" style="left:2px;top:2px"></b><i style="left:26.8px;top:6.6px;width:30.2px;height:3.8px;background:rgba(0,160,70,.5)"></i><i style="left:5.6px;top:12.6px;width:73.4px;height:1.2px;background:#fff700"></i><i style="left:6.0px;top:16.5px;width:51.0px;height:2.4px;background:rgba(30,30,0,.42)"></i><i style="left:6.0px;top:22.0px;width:71.0px;height:2.4px;background:rgba(30,30,0,.42)"></i><i style="left:9.0px;top:26.8px;width:7.0px;height:2.4px;background:rgba(30,30,0,.42)"></i><i style="left:17.0px;top:32.9px;width:10.0px;height:1px;background:rgba(30,30,0,.42)"></i><i style="left:53.0px;top:32.9px;width:4.0px;height:1px;background:rgba(30,30,0,.42)"></i><u style="left:5.2px;top:34.5px;width:36.8px;height:25.4px;border:1px solid #2fb56a;background:#fff"></u><u style="left:43.4px;top:34.5px;width:36.6px;height:7.4px;border:1px solid #2fb56a;background:#f4ffe0"></u><u style="left:43.8px;top:35.0px;width:12.4px;height:6.4px;border:1px dashed #f01010;background:#fff"></u><u style="left:45.3px;top:47.3px;width:29.4px;height:4.2px;border:1px solid #f0a040;background:#fff"></u><i style="left:47.0px;top:48.7px;width:25.0px;height:1.4px;background:rgba(0,170,70,.8)"></i><i style="left:6.0px;top:35.9px;width:34.0px;height:1.3px;background:rgba(20,20,20,.45)"></i><i style="left:6.0px;top:37.9px;width:14.0px;height:1.3px;background:rgba(20,20,20,.45)"></i><i style="left:22.0px;top:38.4px;width:14.0px;height:1.3px;background:rgba(20,20,20,.45)"></i><i style="left:6.0px;top:40.9px;width:28.0px;height:1.3px;background:rgba(20,20,20,.45)"></i><i style="left:6.0px;top:43.4px;width:30.0px;height:1.3px;background:rgba(20,20,20,.45)"></i><i style="left:6.0px;top:45.9px;width:26.0px;height:1.3px;background:rgba(20,20,20,.45)"></i><i style="left:6.0px;top:53.4px;width:4.0px;height:1.3px;background:rgba(20,20,20,.45)"></i><i style="left:18.0px;top:53.9px;width:16.0px;height:1.3px;background:rgba(20,20,20,.45)"></i><i style="left:6.0px;top:56.9px;width:4.0px;height:1.3px;background:rgba(20,20,20,.45)"></i><i style="left:45.0px;top:36.4px;width:5.0px;height:1.3px;background:rgba(20,20,20,.45)"></i><i style="left:45.0px;top:38.9px;width:9.0px;height:1.3px;background:rgba(20,20,20,.45)"></i><u style="left:5.6px;top:49.4px;width:30px;height:2.8px;border:1px solid #f01010"></u><u style="left:5.6px;top:55.4px;width:25px;height:2.8px;border:1px solid #f01010;background:rgba(240,16,16,.5)"></u><svg style="left:30px;top:37px" width="16" height="22" viewBox="0 0 16 22"><path d="M14 2 L6 13 M12 6 L1 19" stroke="#f01010" stroke-width=".8" stroke-dasharray="2 1" fill="none"/></svg></div>
<div class="a th c sel" style="left:27px;top:603px"><b class="lg" style="left:2px;top:2px"></b></div>

<div class="a" style="left:17px;top:337px;width:0;height:0;border-left:6px solid transparent;border-bottom:6px solid #d24726"></div>
<div class="t" style="left:31px;top:332px;font-weight:bold;color:#d24726;font-size:12px"><span class="s" style="transform:scaleX(.87)"><span class="k">タ</span><span class="k">イ</span><span class="k">ト</span><span class="k">ル</span><span class="k">な</span><span class="k">し</span><span class="k">の</span>…</span></div>
<div class="t num o" style="left:14px;top:355px">5</div>
<div class="t num o" style="left:14px;top:438px">6</div>
<div class="t num o" style="left:14px;top:521px">7</div>
<div class="t num o" style="left:14px;top:604px">8</div>

<!-- ===== notes ===== -->
<div class="a" style="left:156px;top:577px;width:740px;height:1px;background:#c8c8c8"></div>
<div class="t" style="left:166px;top:587px;font-size:14px;color:#5a5a5a"><span class="s" style="transform:scaleX(.85)"><span class="k">ノ</span><span class="k">ー</span><span class="k">ト</span><span class="k">を</span><span class="k">入</span><span class="k">力</span></span></div>

<!-- ===== status bar ===== -->
<div class="a" style="left:0;top:611px;width:897px;height:23px;background:#d24726"></div>
<div class="a" style="left:531px;top:611px;width:38px;height:23px;background:#b83b1d"></div>
<div class="t" style="left:8px;top:616px;color:#fff"><span class="s" style="transform:scaleX(.72)"><span class="k">ス</span><span class="k">ラ</span><span class="k">イ</span><span class="k">ド</span></span></div>
<div class="t" style="left:47px;top:616px;color:#fff;font-size:12.5px">5/18</div>
<div class="t" style="left:124px;top:616px;color:#fff"><span class="s" style="transform:scaleX(.95)"><span class="k">日</span><span class="k">本</span><span class="k">語</span></span></div>
<div class="t" style="left:416px;top:616px;color:#fff"><span class="s" style="transform:scaleX(.73)"><span class="k">ノ</span><span class="k">ー</span><span class="k">ト</span></span></div>
<div class="t" style="left:479px;top:616px;color:#fff"><span class="s" style="transform:scaleX(.70)"><span class="k">コ</span><span class="k">メ</span><span class="k">ン</span><span class="k">ト</span></span></div>
<div class="t" style="left:825px;top:616px;color:#fff;font-size:13px">57%</div>
<svg id="svg-status" width="897" height="634" viewBox="0 0 897 634">
 <!-- spell check icon -->
 <g fill="none" stroke="#fff" stroke-width="1.1">
  <path d="M99 617.4 Q95.6 615.6 92.8 617 V626.2 Q95.8 625 99 627 Z"/>
  <path d="M99 617.4 Q101 616.2 103 616.6 M99 627 Q100.4 626 101.6 625.8"/>
  <path d="M102.6 619 L106.6 623.4 M106.6 619 L102.6 623.4" stroke-width="1.3"/>
 </g>
 <!-- notes icon -->
 <path d="M403 619.2 L405.6 616 L408.2 619.2 Z" fill="#fff"/>
 <path d="M400 622.5 H411 M400 625.5 H411 M400 628.5 H411" stroke="#fff" stroke-width="1.1"/>
 <!-- comment icon -->
 <path d="M463 616.4 H474.8 V624.6 H470.6 L468.2 627.6 V624.6 H463 Z" fill="#fff"/>
 <!-- normal view (selected) -->
 <path d="M542.6 615 H557.6 V628 H542.6 Z M547.4 617 V622.8 H555.8 V617 Z M547.4 624.6 V626.2 H555.8 V624.6 Z" fill="#fff" fill-rule="evenodd"/>
 <rect x="549.4" y="618.6" width="4.6" height="2.6" fill="#fff"/>
 <!-- slide sorter -->
 <g fill="#fff">
  <rect x="581.2" y="615" width="5.8" height="5"/><rect x="589.4" y="615" width="5.8" height="5"/>
  <rect x="581.2" y="622.6" width="5.8" height="5.2"/><rect x="589.4" y="622.6" width="5.8" height="5.2"/>
 </g>
 <!-- reading view -->
 <g fill="none" stroke="#fff" stroke-width="1">
  <path d="M619.4 615.6 H625.5 V625.4 H619.4 Z M625.5 615.6 H631.6 V625.4 H625.5"/>
  <path d="M620.8 617.6 H624.2 M620.8 619.6 H624.2 M620.8 621.6 H624.2 M620.8 623.6 H624.2 M626.8 617.6 H630.2 M626.8 619.6 H630.2 M626.8 621.6 H630.2 M626.8 623.6 H630.2" stroke-width=".9"/>
 </g>
 <path d="M624 625.4 H627 L625.5 627.8 Z" fill="#fff"/>
 <!-- slideshow -->
 <rect x="657.2" y="616" width="13" height="1.6" fill="#fff"/>
 <path d="M658.7 617.4 V624 H668.5 V617.4" fill="none" stroke="#fff" stroke-width="1.1"/>
 <path d="M660.4 619.6 H666.8" stroke="#fff" stroke-width="1"/>
 <path d="M663.6 624 V627.4 M661.2 627.6 H666" stroke="#fff" stroke-width="1.1"/>
 <!-- zoom slider -->
 <rect x="688" y="621" width="6" height="2" fill="#fff"/>
 <rect x="698" y="621.5" width="100" height="1" fill="#fff"/>
 <rect x="748" y="617" width="1" height="10" fill="#fff"/>
 <rect x="724" y="615.5" width="4.4" height="13.2" fill="#fff"/>
 <path d="M801.6 622 H810.4 M806 617.6 V626.4" stroke="#fff" stroke-width="2"/>
 <!-- fit to window -->
 <rect x="865" y="616" width="13.4" height="13" fill="#e9917a" stroke="#fff" stroke-width="1.2"/>
 <path d="M871.7 616 V629 M865 622.5 H878.4" stroke="#fff" stroke-width="1"/>
 <path d="M870 619.4 L871.7 617.4 L873.4 619.4 M870 625.6 L871.7 627.6 L873.4 625.6 M868.4 620.8 L866.4 622.5 L868.4 624.2 M875 620.8 L877 622.5 L875 624.2" fill="none" stroke="#fff" stroke-width=".9"/>
</svg>

<svg id="svg-work" width="897" height="634" viewBox="0 0 897 634">
 <!-- scrollbar arrows -->
 <g fill="#6a6a6a">
  <path d="M138 159.4 L141.5 155.4 L145 159.4 Z"/>
  <path d="M138 599.6 H145 L141.5 603.6 Z"/>
  <path d="M884 159.4 L887.5 155.4 L891 159.4 Z"/>
  <path d="M884 511.6 H891 L887.5 515.6 Z"/>
  <!-- prev/next slide -->
  <path d="M884 530 L887.6 526 L891.2 530 Z M884 534 L887.6 530 L891.2 534 Z"/>
  <path d="M884 544 H891.2 L887.6 548 Z M884 548 H891.2 L887.6 552 Z"/>
 </g>
 <g fill="#555"><path d="M19.00 181.60 L20.12 184.76 L23.47 184.85 L20.81 186.89 L21.76 190.10 L19.00 188.20 L16.24 190.10 L17.19 186.89 L14.53 184.85 L17.88 184.76 Z"/><path d="M12.8 184.70000000000002 L14.6 185.70000000000002 M12.6 187.10000000000002 L14.8 187.10000000000002" stroke="#555" stroke-width=".8" fill="none"/><path d="M19.00 264.60 L20.12 267.76 L23.47 267.85 L20.81 269.89 L21.76 273.10 L19.00 271.20 L16.24 273.10 L17.19 269.89 L14.53 267.85 L17.88 267.76 Z"/><path d="M12.8 267.7 L14.6 268.7 M12.6 270.1 L14.8 270.1" stroke="#555" stroke-width=".8" fill="none"/><path d="M19.00 457.30 L20.12 460.46 L23.47 460.55 L20.81 462.59 L21.76 465.80 L19.00 463.90 L16.24 465.80 L17.19 462.59 L14.53 460.55 L17.88 460.46 Z"/><path d="M12.8 460.4 L14.6 461.4 M12.6 462.8 L14.8 462.8" stroke="#555" stroke-width=".8" fill="none"/><path d="M19.00 540.30 L20.12 543.46 L23.47 543.55 L20.81 545.59 L21.76 548.80 L19.00 546.90 L16.24 548.80 L17.19 545.59 L14.53 543.55 L17.88 543.46 Z"/><path d="M12.8 543.4 L14.6 544.4 M12.6 545.8 L14.8 545.8" stroke="#555" stroke-width=".8" fill="none"/></g>
 <!-- alligator on slide -->
 <path d="M285.6 171.6 L293.6 169.2 Q294 165.4 296.4 164.6 Q298.6 164.2 299.2 166.4 Q300.6 164.2 302.4 165 Q303.6 165.8 303.6 167.6 Q312 166.4 317.4 169.2 Q320.6 171 320 174 Q319 177 314.6 177.6 Q308 179 299.4 178 Q296.4 178.2 295 176.4 L286 176 Q285 174.8 286.4 174 L291.6 173.4 L286 173 Q284.8 172.4 285.6 171.6 Z" fill="#ff9dfb" stroke="#1a001a" stroke-width=".9" stroke-linejoin="round"/>
</svg>

</body>
</html>
